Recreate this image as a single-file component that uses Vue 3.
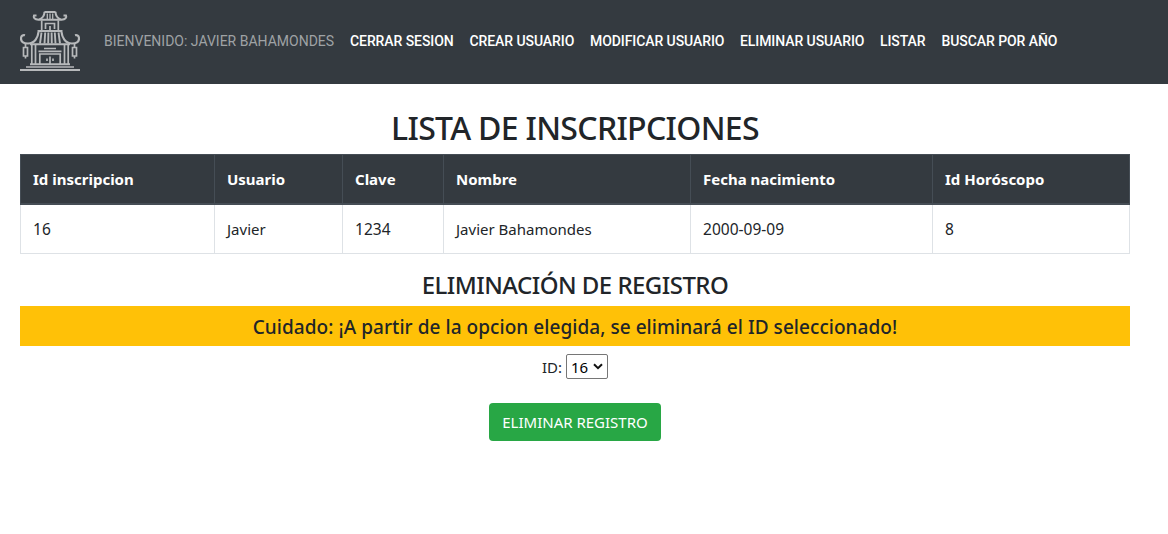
<script setup>
import { ref } from 'vue'

const links = [
  { text: 'CERRAR SESION', cls: 'l1' },
  { text: 'CREAR USUARIO', cls: 'l2' },
  { text: 'MODIFICAR USUARIO', cls: 'l3' },
  { text: 'ELIMINAR USUARIO', cls: 'l4' },
  { text: 'LISTAR', cls: 'l5' },
  { text: 'BUSCAR POR AÑO', cls: 'l6' },
]
const headers = ['Id inscripcion', 'Usuario', 'Clave', 'Nombre', 'Fecha nacimiento', 'Id Horóscopo']
const rows = [['16', 'Javier', '1234', 'Javier Bahamondes', '2000-09-09', '8']]
const selected = ref('16')
const isNumeric = (value) => /^[\d-]+$/.test(value)
</script>

<template>
  <nav class="navbar">
    <a class="brand" href="#">
      <svg width="60" height="60" viewBox="0 0 60 60" fill="none" stroke="#b7b9bb" stroke-width="1.700">
        <path d="M0 59h60M17.500 20h25M10 33.200h40M10 53.300h40" stroke-width="2" />
        <path d="M6 56h48" />
        <path d="M11.800 34v19M15.500 34v19M44.500 34v19M48.200 34v19" />
        <path d="M24 37.500h12M18.500 40.300h23" />
        <path d="M19.800 53V43h20.400v10" />
        <path d="M30 45.500V53M27 47.500v2.500M33 47.500v2.500" />
        <path d="M18.500 21C18 26 15 32.500 8 32.500C3 32.500 1 30.500 1 27.500C1 25 3 23.700 5 24.300M41.500 21C42 26 45 32.500 52 32.500C57 32.500 59 30.500 59 27.500C59 25 57 23.700 55 24.300" stroke-width="2.200" />
        <path d="M21.500 21.500l-1.500 11M25.200 21.500l-.700 11M28.400 21.500l-.200 11M31.600 21.500l.200 11M34.800 21.500l.700 11M38.500 21.500l1.500 11" stroke-width="1.900" />
        <path d="M21.700 9.500V19M38.300 9.500V19M25.500 18v-5.500h9V18M30 15v4" />
        <path d="M18 8.700h24M24.500 1h11M24.500.800C24.500 5 22.500 7.500 18.500 8.700C14.500 8.500 13 6.500 14 4.500h2.500M35.500.800C35.500 5 37.500 7.500 41.500 8.700C45.500 8.500 47 6.500 46 4.500h-2.500" stroke-width="2" />
        <path d="M27.300 2.500V8M30 2.500V8M32.700 2.500V8" stroke-width="1.300" />
        <path d="M5.500 32v4M3.500 36.500h4V45h-4zM5.500 45v2.500M54.500 32v4M52.500 36.500h4V45h-4zM54.500 45v2.500" />
      </svg>
    </a>
    <span class="welcome">BIENVENIDO: JAVIER BAHAMONDES</span>
    <a v-for="l in links" :key="l.text" :class="['link', l.cls]" href="#">{{ l.text }}</a>
  </nav>
  <main class="content">
    <h2>LISTA DE INSCRIPCIONES</h2>
    <table>
      <colgroup><col v-for="n in 6" :key="n" :class="'c' + n" /></colgroup>
      <thead><tr><th v-for="h in headers" :key="h">{{ h }}</th></tr></thead>
      <tbody>
        <tr v-for="r in rows" :key="r[0]"><td v-for="c in r" :key="c" :class="{ num: isNumeric(c) }">{{ c }}</td></tr>
      </tbody>
    </table>
    <h4>ELIMINACIÓN DE REGISTRO</h4>
    <h5>Cuidado: ¡A partir de la opcion elegida, se eliminará el ID seleccionado!</h5>
    <div class="field">
      <label for="id">ID:</label>
      <div class="select">
        <select id="id" v-model="selected"><option>16</option></select>
        <svg width="10" height="7" viewBox="0 0 10 7"><path d="M1 1.200l4 4 4-4" fill="none" stroke="#111" stroke-width="2" /></svg>
      </div>
    </div>
    <button type="button">ELIMINAR REGISTRO</button>
  </main>
</template>

<style>
body { margin: 0; background: #fff; overflow: hidden; }
</style>

<style scoped>
* { box-sizing: border-box; }
.navbar { height: 84px; background: #343a40; display: flex; align-items: center; padding: 0 20px 2px; font: 500 14px/24px Roboto, sans-serif; white-space: nowrap; }
.brand { display: flex; margin-right: 24px; }
.welcome { width: 246px; color: #9fa2a5; font-weight: 400; }
.link { color: #fff; text-decoration: none; letter-spacing: -.08px; }
.l1 { width: 119.500px; }
.l2 { width: 120.500px; }
.l3 { width: 150px; }
.l4 { width: 140px; }
.l5 { width: 61.500px; }
.content { width: 1150px; padding: 25px 20px 0; display: flex; flex-direction: column; align-items: center; font: 16px/24px "Noto Sans", "Open Sans", sans-serif; color: #212529; }
h2, h4, h5 { margin: 0; font-weight: 500; white-space: nowrap; }
h2 { font-size: 32px; line-height: 38px; height: 45px; letter-spacing: -.68px; }
table { width: 1110px; table-layout: fixed; border-collapse: collapse; text-align: left; }
.c1 { width: 194px; }
.c2 { width: 128px; }
.c3 { width: 101px; }
.c4 { width: 247px; }
.c5 { width: 242px; }
.c6 { width: 197px; }
th, td { padding: 12px; height: 49px; border: 1px solid #dee2e6; font-size: 15px; line-height: 24px; white-space: nowrap; }
th { padding: 12px 12px 11px; background: #343a40; color: #fff; font-weight: 700; border-color: #454d55; border-bottom-width: 2px; }
td.num { font-size: 15.500px; letter-spacing: .02px; }
h4 { font-size: 24px; line-height: 29px; margin: 16px 0 7px; letter-spacing: -.53px; }
h5 { width: 1110px; height: 40px; background: #ffc107; font-size: 19px; line-height: 42px; text-align: center; letter-spacing: .055px; }
.field { display: flex; align-items: center; gap: 4px; margin-top: 8px; height: 25px; font-size: 15px; }
.field label { padding-top: 2px; }
.select { position: relative; width: 42px; height: 25px; }
select { display: block; appearance: none; width: 42px; height: 25px; padding: 0 0 0 4px; border: 1px solid #767676; border-radius: 2px; background: #fff; color: #000; font: inherit; }
.select svg { position: absolute; right: 5px; top: 9px; }
button { width: 172px; height: 38px; margin-top: 24px; padding: 0; border: 0; border-radius: 4px; background: #28a745; color: #fff; font: 15px/24px "Noto Sans", sans-serif; white-space: nowrap; }
</style>
